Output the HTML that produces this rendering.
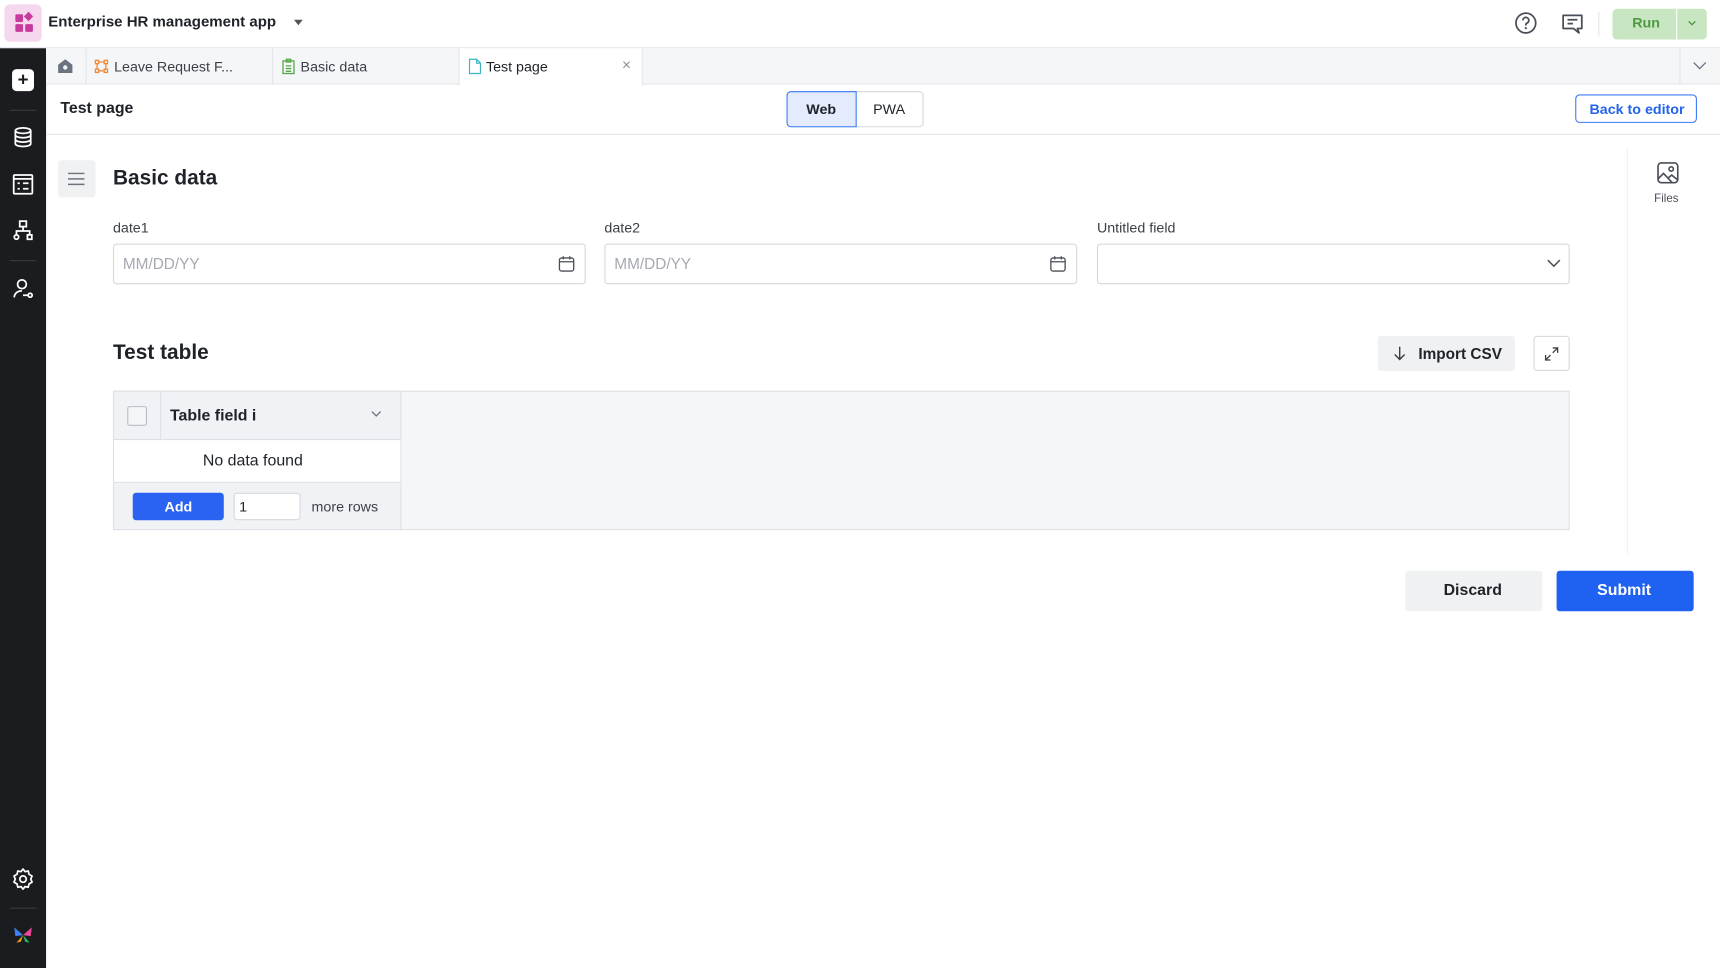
<!DOCTYPE html>
<html><head><meta charset="utf-8">
<style>
*{box-sizing:border-box;margin:0;padding:0}
html,body{width:1720px;height:968px;overflow:hidden;background:#fff;font-family:"Liberation Sans",Arial,sans-serif;color:#1f2329}
#s{width:1568px;height:882px;position:relative;transform:scale(1.09694,1.0975);transform-origin:0 0}
.a{position:absolute}
.t{white-space:nowrap}
svg{display:block}
</style></head><body><div id="s">
<!-- top bar -->
<div class="a" style="left:0;top:0;width:1568px;height:44px;border-bottom:1px solid #e3e5ea;background:#fff"></div>
<div class="a" style="left:4px;top:4px;width:34px;height:34px;border-radius:5px;background:#f5d8ee"></div>
<div class="a" style="left:14px;top:13px;width:7px;height:7px;background:#c83a9b;border-radius:1px"></div>
<div class="a" style="left:23px;top:12px;width:6px;height:6px;background:#c83a9b;transform:rotate(45deg)"></div>
<div class="a" style="left:14px;top:22px;width:7px;height:7px;background:#c83a9b;border-radius:1px"></div>
<div class="a" style="left:23px;top:22px;width:7px;height:7px;background:#c83a9b;border-radius:1px"></div>
<div class="a t" style="left:44px;top:12px;font-size:13.7px;font-weight:bold;color:#1f2329">Enterprise HR management app</div>
<div class="a" style="left:268px;top:18px;border:4px solid transparent;border-top:5px solid #555"></div>
<svg class="a" style="left:1380px;top:10px" width="22" height="22" viewBox="0 0 22 22"><circle cx="11" cy="11" r="9" fill="none" stroke="#4a4f57" stroke-width="1.6"/><path d="M8.3 8.6a2.7 2.7 0 1 1 3.6 2.5c-.6.3-.9.7-.9 1.4v.7" fill="none" stroke="#4a4f57" stroke-width="1.6"/><circle cx="11" cy="15.6" r="1" fill="#4a4f57"/></svg>
<svg class="a" style="left:1422px;top:10px" width="23" height="23" viewBox="0 0 23 23"><path d="M3 4h17v12h-4l1.5 4-5-4H3z" fill="none" stroke="#4a4f57" stroke-width="1.6" stroke-linejoin="round"/><path d="M7 8h9M7 11.5h5" stroke="#4a4f57" stroke-width="1.6"/></svg>
<div class="a" style="left:1457px;top:11px;width:1px;height:22px;background:#e3e5ea"></div>
<div class="a" style="left:1470px;top:8px;width:86px;height:28px;border-radius:4px;background:#c9e6c2"></div>
<div class="a" style="left:1528px;top:8px;width:1px;height:28px;background:#fff"></div>
<div class="a t" style="left:1488px;top:13px;font-size:13px;font-weight:bold;color:#4c9a3f">Run</div>
<svg class="a" style="left:1538px;top:18px" width="9" height="6" viewBox="0 0 9 6"><path d="M1.5 1.5l3 3 3-3" fill="none" stroke="#4c9a3f" stroke-width="1.2"/></svg>
<!-- sidebar -->
<div class="a" style="left:0;top:44px;width:42px;height:838px;background:#1b1c1f"></div>
<div class="a" style="left:11px;top:63px;width:20px;height:20px;background:#fff;border-radius:4px;text-align:center;line-height:19px;font-size:17px;font-weight:bold;color:#1b1c1f">+</div>
<div class="a" style="left:9px;top:100px;width:24px;height:1px;background:#3a3b40"></div>
<svg class="a" style="left:11px;top:115px" width="20" height="20" viewBox="0 0 20 20" fill="none" stroke="#fff" stroke-width="1.6"><ellipse cx="10" cy="4" rx="7" ry="2.5"/><path d="M3 4v12c0 1.4 3.1 2.5 7 2.5s7-1.1 7-2.5V4M3 8c0 1.4 3.1 2.5 7 2.5S17 9.4 17 8M3 12c0 1.4 3.1 2.5 7 2.5s7-1.1 7-2.5"/></svg>
<svg class="a" style="left:11px;top:158px" width="20" height="20" viewBox="0 0 20 20" fill="none" stroke="#fff" stroke-width="1.6"><rect x="1.5" y="1.5" width="17" height="17" rx="1"/><path d="M1.5 5h17M5 9h2M5 14h2M10 9h5M10 14h5"/></svg>
<svg class="a" style="left:11px;top:200px" width="20" height="20" viewBox="0 0 20 20" fill="none" stroke="#fff" stroke-width="1.6"><rect x="7" y="1.5" width="6" height="5"/><path d="M10 6.5v4M4 14v-3.5h12V14"/><circle cx="4" cy="16" r="2"/><rect x="14" y="14" width="4" height="4"/></svg>
<div class="a" style="left:9px;top:237px;width:24px;height:1px;background:#3a3b40"></div>
<svg class="a" style="left:11px;top:253px" width="20" height="20" viewBox="0 0 20 20" fill="none" stroke="#fff" stroke-width="1.6"><circle cx="9" cy="6" r="4"/><path d="M2 18c0-3.5 3-6 7-6M10 16h5"/><circle cx="16.5" cy="16" r="1.8"/></svg>
<svg class="a" style="left:10px;top:790px" width="22" height="22" viewBox="0 0 24 24" fill="none" stroke="#fff" stroke-width="1.7"><circle cx="12" cy="12" r="3.2"/><path d="M12 2l2 2.6 3.2-.7.7 3.2L21 9l-1.3 3 1.3 3-3.1 1.9-.7 3.2-3.2-.7L12 22l-2-2.6-3.2.7-.7-3.2L3 15l1.3-3L3 9l3.1-1.9.7-3.2 3.2.7z" stroke-linejoin="round"/></svg>
<div class="a" style="left:9px;top:827px;width:24px;height:1px;background:#3a3b40"></div>
<svg class="a" style="left:11px;top:843px" width="20" height="18" viewBox="0 0 20 18"><path d="M10 9L2 2l1 8z" fill="#3b82f6"/><path d="M10 9l8-7-1 8z" fill="#ec4899"/><path d="M10 9l-6 7 4-1z" fill="#f59e0b"/><path d="M10 9l6 7-4-1z" fill="#22c55e"/></svg>
<!-- tabs -->
<div class="a" style="left:42px;top:44px;width:1526px;height:33px;background:#f5f6f8;border-bottom:1px solid #e3e5ea"></div>
<div class="a" style="left:78px;top:44px;width:1px;height:33px;background:#e3e5ea"></div>
<svg class="a" style="left:52px;top:53px" width="15" height="15" viewBox="0 0 15 15"><path d="M7.5 1L14 6v7.5H1V6z" fill="#6b7280"/><circle cx="7.5" cy="8.5" r="2" fill="#f5f6f8"/></svg>
<div class="a" style="left:248px;top:44px;width:1px;height:33px;background:#e3e5ea"></div>
<svg class="a" style="left:86px;top:54px" width="13" height="13" viewBox="0 0 13 13" fill="none" stroke="#ee8a3a" stroke-width="1.2"><rect x="1" y="1" width="3" height="3"/><rect x="9" y="1" width="3" height="3"/><rect x="1" y="9" width="3" height="3"/><rect x="9" y="9" width="3" height="3"/><path d="M4 2.5h5M4 10.5h5M2.5 4v5M10.5 4v5"/></svg>
<div class="a t" style="left:104px;top:53px;font-size:13px;color:#3b3f46">Leave Request F...</div>
<svg class="a" style="left:257px;top:53px" width="12" height="15" viewBox="0 0 12 15" fill="none" stroke="#58a84a" stroke-width="1.2"><rect x="1" y="2.5" width="10" height="11.5"/><rect x="4" y="1" width="4" height="2.5"/><path d="M3.5 7h5M3.5 9.5h5M3.5 12h5"/></svg>
<div class="a t" style="left:274px;top:53px;font-size:13px;color:#3b3f46">Basic data</div>
<div class="a" style="left:418px;top:44px;width:168px;height:34px;background:#fff;border-left:1px solid #e3e5ea;border-right:1px solid #e3e5ea"></div>
<svg class="a" style="left:427px;top:53px" width="12" height="15" viewBox="0 0 12 15" fill="none" stroke="#3fb4c9" stroke-width="1.1"><path d="M1 1h6.5L11 4.5V14H1z M7.5 1v3.5H11"/></svg>
<div class="a t" style="left:443px;top:53px;font-size:13px;color:#1f2329">Test page</div>
<div class="a t" style="left:567px;top:51px;font-size:14px;color:#8a8f98">×</div>
<div class="a" style="left:1531px;top:44px;width:1px;height:33px;background:#e3e5ea"></div>
<svg class="a" style="left:1543px;top:56px" width="13" height="8" viewBox="0 0 13 8"><path d="M1 1l5.5 5.5L12 1" fill="none" stroke="#6b7280" stroke-width="1.2"/></svg>
<!-- header -->
<div class="a t" style="left:55px;top:91px;font-size:14.5px;font-weight:bold;color:#1f2329">Test page</div>
<div class="a" style="left:717px;top:83px;width:125px;height:33px;border:1px solid #d5d8de;border-radius:4px"></div>
<div class="a" style="left:717px;top:83px;width:64px;height:33px;border:1px solid #3b7bf6;border-radius:4px 0 0 4px;background:#e3ebfd"></div>
<div class="a t" style="left:735px;top:92px;font-size:13px;font-weight:bold;color:#1f2329">Web</div>
<div class="a t" style="left:796px;top:92px;font-size:13px;color:#1f2329">PWA</div>
<div class="a" style="left:1436px;top:86px;width:111px;height:26px;border:1px solid #3b7bf6;border-radius:4px"></div>
<div class="a t" style="left:1449px;top:92px;font-size:13px;font-weight:bold;color:#2463eb">Back to editor</div>
<div class="a" style="left:42px;top:122px;width:1526px;height:1px;background:#e3e5ea"></div>
<!-- right panel -->
<div class="a" style="left:1483px;top:135px;width:1px;height:370px;background:#eef0f3"></div>
<svg class="a" style="left:1510px;top:147px" width="21" height="21" viewBox="0 0 21 21" fill="none" stroke="#4a4f57" stroke-width="1.5"><rect x="1.5" y="1.5" width="18" height="18" rx="3"/><circle cx="13.5" cy="7" r="2"/><path d="M1.5 16l5-5 8 8.5M11 15l3-2.5 5.5 4.5"/></svg>
<div class="a t" style="left:1508px;top:175px;font-size:10.5px;color:#4a4f57">Files</div>
<!-- basic data -->
<div class="a" style="left:53px;top:146px;width:34px;height:34px;background:#f0f1f3;border-radius:3px"></div>
<svg class="a" style="left:61px;top:156px" width="17" height="14" viewBox="0 0 17 14"><path d="M1 2h15M1 7h15M1 12h15" stroke="#6b7280" stroke-width="1.3"/></svg>
<div class="a t" style="left:103px;top:152px;font-size:19px;font-weight:bold;color:#1f2329">Basic data</div>
<div class="a t" style="left:103px;top:200px;font-size:13px;color:#3b3f46">date1</div>
<div class="a t" style="left:551px;top:200px;font-size:13px;color:#3b3f46">date2</div>
<div class="a t" style="left:1000px;top:200px;font-size:13px;color:#3b3f46">Untitled field</div>
<div class="a" style="left:103px;top:222px;width:431px;height:37px;border:1px solid #d5d8de;border-radius:3px"></div>
<div class="a" style="left:551px;top:222px;width:431px;height:37px;border:1px solid #d5d8de;border-radius:3px"></div>
<div class="a" style="left:1000px;top:222px;width:431px;height:37px;border:1px solid #d5d8de;border-radius:3px"></div>
<div class="a t" style="left:112px;top:232px;font-size:14px;color:#a5a9b0">MM/DD/YY</div>
<div class="a t" style="left:560px;top:232px;font-size:14px;color:#a5a9b0">MM/DD/YY</div>
<svg class="a" style="left:509px;top:233px" width="15" height="15" viewBox="0 0 15 15" fill="none" stroke="#4a4f57" stroke-width="1.2"><rect x="1" y="2" width="13" height="12" rx="2"/><path d="M1 5.5h13M4.5 0.5v3M10.5 0.5v3"/></svg>
<svg class="a" style="left:957px;top:233px" width="15" height="15" viewBox="0 0 15 15" fill="none" stroke="#4a4f57" stroke-width="1.2"><rect x="1" y="2" width="13" height="12" rx="2"/><path d="M1 5.5h13M4.5 0.5v3M10.5 0.5v3"/></svg>
<svg class="a" style="left:1410px;top:236px" width="13" height="8" viewBox="0 0 13 8"><path d="M1 1l5.5 5.5L12 1" fill="none" stroke="#4a4f57" stroke-width="1.4"/></svg>
<!-- test table -->
<div class="a t" style="left:103px;top:311px;font-size:19px;font-weight:bold;color:#1f2329">Test table</div>
<div class="a" style="left:1256px;top:306px;width:125px;height:32px;background:#f0f1f3;border-radius:3px"></div>
<svg class="a" style="left:1270px;top:315px" width="12" height="14" viewBox="0 0 12 14"><path d="M6 1v11M1.5 8l4.5 4.5L10.5 8" fill="none" stroke="#3b3f46" stroke-width="1.3"/></svg>
<div class="a t" style="left:1293px;top:314px;font-size:14px;font-weight:bold;color:#1f2329">Import CSV</div>
<div class="a" style="left:1398px;top:306px;width:33px;height:32px;border:1px solid #d5d8de;border-radius:3px"></div>
<svg class="a" style="left:1408px;top:316px" width="13" height="13" viewBox="0 0 13 13" fill="none" stroke="#3b3f46" stroke-width="1.2"><path d="M7.5 1H12v4.5M12 1L7.5 5.5M5.5 12H1V7.5M1 12l4.5-4.5"/></svg>
<div class="a" style="left:103px;top:356px;width:1328px;height:127px;background:#f5f6f8;border:1px solid #dde0e5"></div>
<div class="a" style="left:103px;top:356px;width:263px;height:127px;border:1px solid #dde0e5;background:#f0f2f5"></div>
<div class="a" style="left:104px;top:400px;width:261px;height:40px;background:#fff;border-top:1px solid #dde0e5;border-bottom:1px solid #dde0e5"></div>
<div class="a" style="left:146px;top:357px;width:1px;height:43px;background:#dde0e5"></div>
<div class="a" style="left:116px;top:370px;width:18px;height:18px;border:1.5px solid #b8bcc4;border-radius:2px;background:#f5f6f8"></div>
<div class="a t" style="left:155px;top:371px;font-size:14.5px;font-weight:bold;color:#1f2329">Table field i</div>
<svg class="a" style="left:338px;top:374px" width="10" height="7" viewBox="0 0 10 7"><path d="M1 1l4 4 4-4" fill="none" stroke="#6b7280" stroke-width="1.2"/></svg>
<div class="a t" style="left:185px;top:412px;font-size:14.5px;color:#1f2329">No data found</div>
<div class="a" style="left:121px;top:449px;width:83px;height:25px;background:#2a63f2;border-radius:3px"></div>
<div class="a t" style="left:150px;top:454px;font-size:13px;font-weight:bold;color:#fff">Add</div>
<div class="a" style="left:213px;top:449px;width:61px;height:25px;background:#fff;border:1px solid #d5d8de;border-radius:3px"></div>
<div class="a t" style="left:218px;top:454px;font-size:13px;color:#1f2329">1</div>
<div class="a t" style="left:284px;top:454px;font-size:13px;color:#3b3f46">more rows</div>
<!-- actions -->
<div class="a" style="left:1281px;top:520px;width:125px;height:37px;background:#f0f1f3;border-radius:3px"></div>
<div class="a t" style="left:1316px;top:530px;font-size:14.5px;font-weight:bold;color:#1f2329">Discard</div>
<div class="a" style="left:1419px;top:520px;width:125px;height:37px;background:#1f62f2;border-radius:3px"></div>
<div class="a t" style="left:1456px;top:530px;font-size:14.5px;font-weight:bold;color:#fff">Submit</div>
</div></body></html>
